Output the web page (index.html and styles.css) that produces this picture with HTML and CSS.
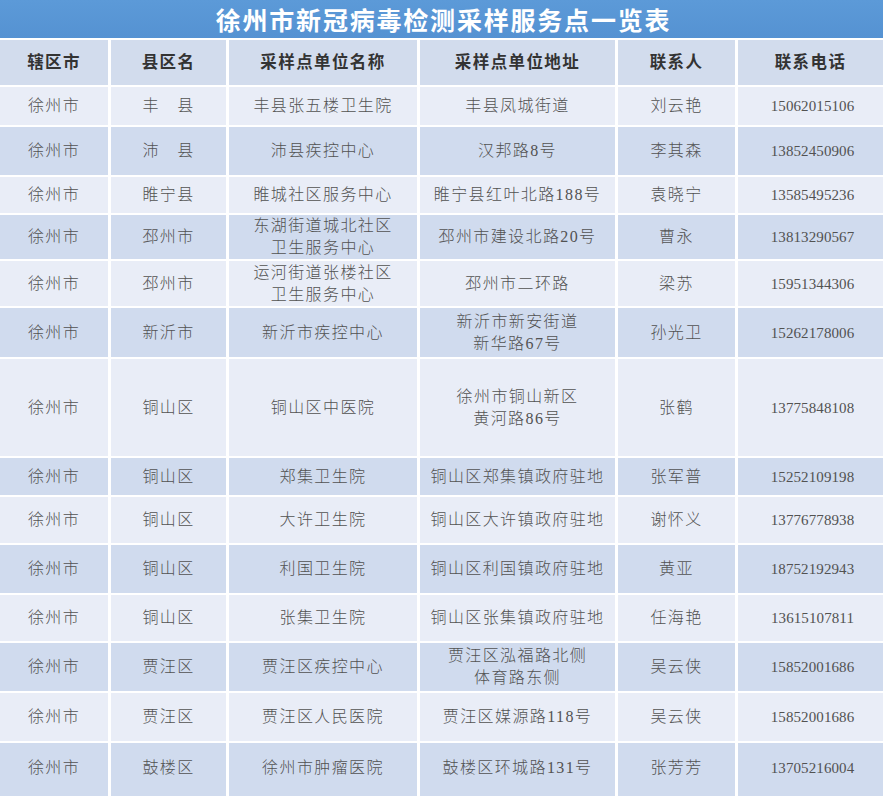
FILE: index.html
```html
<!DOCTYPE html>
<html lang="zh-CN">
<head>
<meta charset="utf-8">
<title>徐州市新冠病毒检测采样服务点一览表</title>
<link rel="stylesheet" href="styles.css">
</head>
<body>
<div class="sheet">
  <div class="title">徐州市新冠病毒检测采样服务点一览表</div>
  <div class="grid">
    <div class="cell head">辖区市</div><div class="cell head">县区名</div><div class="cell head">采样点单位名称</div><div class="cell head">采样点单位地址</div><div class="cell head">联系人</div><div class="cell head">联系电话</div>

    <div class="cell lt">徐州市</div><div class="cell lt">丰　县</div><div class="cell lt">丰县张五楼卫生院</div><div class="cell lt">丰县凤城街道</div><div class="cell lt">刘云艳</div><div class="cell lt num">15062015106</div>

    <div class="cell dk">徐州市</div><div class="cell dk">沛　县</div><div class="cell dk">沛县疾控中心</div><div class="cell dk">汉邦路8号</div><div class="cell dk">李其森</div><div class="cell dk num">13852450906</div>

    <div class="cell lt">徐州市</div><div class="cell lt">睢宁县</div><div class="cell lt">睢城社区服务中心</div><div class="cell lt">睢宁县红叶北路188号</div><div class="cell lt">袁晓宁</div><div class="cell lt num">13585495236</div>

    <div class="cell dk">徐州市</div><div class="cell dk">邳州市</div><div class="cell dk">东湖街道城北社区<br>卫生服务中心</div><div class="cell dk">邳州市建设北路20号</div><div class="cell dk">曹永</div><div class="cell dk num">13813290567</div>

    <div class="cell lt">徐州市</div><div class="cell lt">邳州市</div><div class="cell lt">运河街道张楼社区<br>卫生服务中心</div><div class="cell lt">邳州市二环路</div><div class="cell lt">梁苏</div><div class="cell lt num">15951344306</div>

    <div class="cell dk">徐州市</div><div class="cell dk">新沂市</div><div class="cell dk">新沂市疾控中心</div><div class="cell dk">新沂市新安街道<br>新华路67号</div><div class="cell dk">孙光卫</div><div class="cell dk num">15262178006</div>

    <div class="cell lt">徐州市</div><div class="cell lt">铜山区</div><div class="cell lt">铜山区中医院</div><div class="cell lt">徐州市铜山新区<br>黄河路86号</div><div class="cell lt">张鹤</div><div class="cell lt num">13775848108</div>

    <div class="cell dk">徐州市</div><div class="cell dk">铜山区</div><div class="cell dk">郑集卫生院</div><div class="cell dk">铜山区郑集镇政府驻地</div><div class="cell dk">张军普</div><div class="cell dk num">15252109198</div>

    <div class="cell lt">徐州市</div><div class="cell lt">铜山区</div><div class="cell lt">大许卫生院</div><div class="cell lt">铜山区大许镇政府驻地</div><div class="cell lt">谢怀义</div><div class="cell lt num">13776778938</div>

    <div class="cell dk">徐州市</div><div class="cell dk">铜山区</div><div class="cell dk">利国卫生院</div><div class="cell dk">铜山区利国镇政府驻地</div><div class="cell dk">黄亚</div><div class="cell dk num">18752192943</div>

    <div class="cell lt">徐州市</div><div class="cell lt">铜山区</div><div class="cell lt">张集卫生院</div><div class="cell lt">铜山区张集镇政府驻地</div><div class="cell lt">任海艳</div><div class="cell lt num">13615107811</div>

    <div class="cell dk">徐州市</div><div class="cell dk">贾汪区</div><div class="cell dk">贾汪区疾控中心</div><div class="cell dk">贾汪区泓福路北侧<br>体育路东侧</div><div class="cell dk">吴云侠</div><div class="cell dk num">15852001686</div>

    <div class="cell lt">徐州市</div><div class="cell lt">贾汪区</div><div class="cell lt">贾汪区人民医院</div><div class="cell lt">贾汪区媒源路118号</div><div class="cell lt">吴云侠</div><div class="cell lt num">15852001686</div>

    <div class="cell dk last">徐州市</div><div class="cell dk last">鼓楼区</div><div class="cell dk last">徐州市肿瘤医院</div><div class="cell dk last">鼓楼区环城路131号</div><div class="cell dk last">张芳芳</div><div class="cell dk num last">13705216004</div>
  </div>
</div>
</body>
</html>
```

FILE: styles.css
```css
html, body {
  margin: 0;
  padding: 0;
  background: #ffffff;
}
body {
  width: 884px;
  height: 796px;
  overflow: hidden;
  font-family: "Liberation Serif", "Noto Sans CJK SC", serif;
}
.sheet {
  width: 883px;
  display: flex;
  flex-direction: column;
  gap: 2px;
}
.title {
  height: 38px;
  background: linear-gradient(#5c9ad8, #5592d2);
  color: #ffffff;
  font-family: "Noto Sans CJK SC", sans-serif;
  font-weight: 700;
  font-size: 25px;
  letter-spacing: 1.8px;
  display: flex;
  align-items: center;
  justify-content: center;
  padding-left: 4px;
  line-height: 1;
}
.grid {
  display: grid;
  grid-template-columns: 108px 115px 188px 195px 117px 145px;
  grid-template-rows: 45px 38px 48px 36px 44px 45px 49px 97px 37px 46px 48px 46px 48px 48px 53px;
  column-gap: 3px;
  row-gap: 2px;
}
.cell {
  display: flex;
  align-items: center;
  justify-content: center;
  text-align: center;
  font-size: 16px;
  letter-spacing: 1.4px;
  line-height: 22px;
  color: #525252;
  font-weight: 300;
}
.head {
  background: #d2dced;
  color: #333333;
  font-weight: 700;
  font-size: 16.5px;
}
.lt {
  background: #e9edf7;
}
.dk {
  background: #d0dbee;
}
.last {
  padding-bottom: 3px;
}
.num {
  font-size: 15px;
  letter-spacing: 0.1px;
  padding-left: 4px;
}
```
